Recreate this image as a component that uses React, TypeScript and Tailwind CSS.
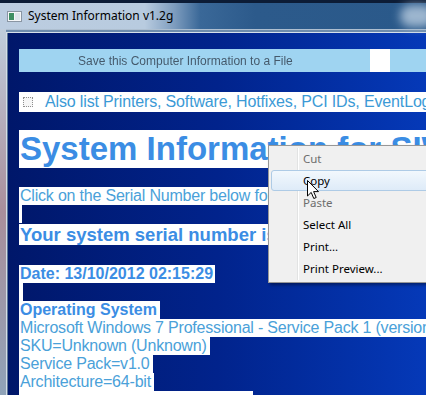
import React from 'react';

const menuItems = [
  { label: 'Cut', disabled: true },
  { label: 'Copy', active: true },
  { label: 'Paste', disabled: true },
  { label: 'Select All' },
  { label: 'Print...' },
  { label: 'Print Preview...' },
];

const osLines = [
  'Microsoft Windows 7 Professional - Service Pack 1 (version 6.1, build 7601)',
  'SKU=Unknown (Unknown)',
  'Service Pack=v1.0',
  'Architecture=64-bit',
];

function AppIcon() {
  return (
    <svg width="15" height="11" viewBox="0 0 15 11" className="shrink-0">
      <rect x="0.5" y="0.5" width="14" height="10" fill="#f4f6f8" stroke="#8a96a3" />
      <rect x="2" y="2" width="5" height="7" fill="#3f8f63" />
      <rect x="8" y="2" width="5" height="7" fill="#dfe6ec" />
    </svg>
  );
}

function Cursor() {
  return (
    <svg width="13" height="20" viewBox="0 0 13 20" className="absolute left-[307px] top-[180px]">
      <path
        d="M0.5 0.5 L0.5 16 L4.2 12.4 L6.8 18.5 L9.2 17.5 L6.6 11.6 L11.5 11.6 Z"
        fill="#ffffff"
        stroke="#000000"
        strokeWidth="1"
      />
    </svg>
  );
}

function ContextMenu() {
  return (
    <div className="absolute left-[268px] top-[145px] w-[180px] h-[138px] bg-[#f0f0f0] border border-[#979797] shadow-[2px_2px_3px_rgba(0,0,0,0.4)] py-[2px] font-['Noto_Sans',sans-serif] text-[11.5px]">
      <div className="absolute left-[28px] top-[2px] bottom-[2px] w-[2px] border-l border-[#e2e3e3] bg-white" />
      {menuItems.map((item) => (
        <div key={item.label} className="relative h-[22px] flex items-center">
          {item.active && (
            <div className="absolute left-[2px] right-[2px] top-[0px] bottom-[1px] rounded-[3px] border border-[#aecbe6] bg-linear-to-b from-[#f2f8fd] to-[#deebf8]" />
          )}
          <span className={`relative pl-[34px] ${item.disabled ? 'text-[#6d6d6d]' : 'text-black'}`}>
            {item.label}
          </span>
        </div>
      ))}
    </div>
  );
}

export default function App() {
  return (
    <div className="w-[426px] h-[395px] overflow-hidden relative flex flex-col bg-[#0b1a33] font-['Liberation_Sans',Arial,sans-serif]">
      {/* window above */}
      <div className="h-[3px] shrink-0 bg-[#0c1c36]" />

      {/* title bar */}
      <div className="h-[26px] shrink-0 relative flex items-center gap-[6px] pl-[7px] bg-[linear-gradient(90deg,#bccde0_0%,#b8cbdf_34%,#7d9cbe_41%,#3a6898_47%,#2c5a8b_60%,#2a598a_100%)]">
        <div className="absolute right-[-8px] top-[2px] w-[34px] h-[22px] rounded-full bg-[#9db6cf] blur-[5px]" />
        <AppIcon />
        <span className="relative font-['Noto_Sans',sans-serif] text-[12px] text-black leading-none">
          System Information v1.2g
        </span>
      </div>

      <div className="flex-1 flex min-h-0">
        {/* left frame */}
        <div className="w-[6px] shrink-0 bg-linear-to-b from-[#bfcddc] via-[#a98e9b] to-[#8fa3b8]" />

        <div className="flex-1 flex flex-col min-w-0">
          <div className="h-[4px] shrink-0 border-t border-[#aebfd0] border-b border-b-[#d6e0ea] bg-[#6e8cad]" />
          <div className="flex-1 flex min-h-0">
            <div className="w-[2px] shrink-0 border-l border-[#d4dde7] bg-[#5d7696]" />

            {/* client area */}
            <div className="flex-1 min-w-0 overflow-hidden bg-linear-to-r from-[#00176a] via-[#01238c] to-[#0539b8] pl-[11px] pt-[16px] flex flex-col">
              {/* save button (dithered) */}
              <div className="h-[23px] shrink-0 flex items-center bg-[#9fd4f1]">
                <span className="w-[351px] shrink-0 pl-[59px] text-[12px] text-[#27313f] opacity-75 whitespace-nowrap">
                  Save this Computer Information to a File
                </span>
                <div className="w-[20px] h-full shrink-0 bg-white" />
              </div>

              {/* checkbox row */}
              <div className="mt-[20px] h-[20px] shrink-0 bg-white flex items-center">
                <div className="ml-[4px] w-[10px] h-[10px] border border-dotted border-[#8f8f8f] bg-[#f6f6f6] shrink-0" />
                <span className="ml-[12px] text-[16px] tracking-[-0.15px] text-[#3b9ad6] whitespace-nowrap">
                  Also list Printers, Software, Hotfixes, PCI IDs, EventLog
                </span>
              </div>

              {/* heading */}
              <div className="mt-[18px] h-[38px] shrink-0 flex">
                <span className="bg-white pl-[1px] pr-[3px] text-[33px] leading-[38px] font-bold text-[#3b8de4] whitespace-nowrap">
                  System Information for SIW-PC
                </span>
              </div>

              <div className="mt-[19px] h-[18px] shrink-0 flex">
                <span className="bg-white pl-[1px] pr-[2px] text-[16px] leading-[18px] tracking-[-0.2px] text-[#4aa1d9] whitespace-nowrap">
                  Click on the Serial Number below for more details
                </span>
              </div>
              <div className="h-[18px] w-[3px] shrink-0 bg-white" />
              <div className="mt-[1px] h-[21px] shrink-0 flex">
                <span className="bg-white pl-[1px] pr-[2px] text-[18.5px] leading-[21px] font-bold text-[#3b8de4] whitespace-nowrap">
                  Your system serial number is: 5CB1234XYZ
                </span>
              </div>

              <div className="mt-[20px] h-[18px] shrink-0 flex">
                <span className="bg-white pl-[1px] pr-[2px] text-[16px] leading-[18px] font-bold text-[#3b8de4] whitespace-nowrap">
                  Date: 13/10/2012 02:15:29
                </span>
              </div>
              <div className="h-[18px] w-[4px] shrink-0 bg-white" />

              <div className="h-[18px] shrink-0 flex">
                <span className="bg-white pl-[1px] pr-[3px] text-[16px] leading-[18px] font-bold text-[#3b8de4] whitespace-nowrap">
                  Operating System
                </span>
              </div>
              {osLines.map((line) => (
                <div key={line} className="h-[18px] shrink-0 flex">
                  <span className="bg-white pl-[1px] pr-[3px] text-[16px] leading-[18px] tracking-[-0.2px] text-[#4aa1d9] whitespace-nowrap">
                    {line}
                  </span>
                </div>
              ))}
              <div className="h-[18px] w-[234px] shrink-0 bg-white" />
            </div>
          </div>
        </div>
      </div>

      <ContextMenu />
      <Cursor />
    </div>
  );
}
